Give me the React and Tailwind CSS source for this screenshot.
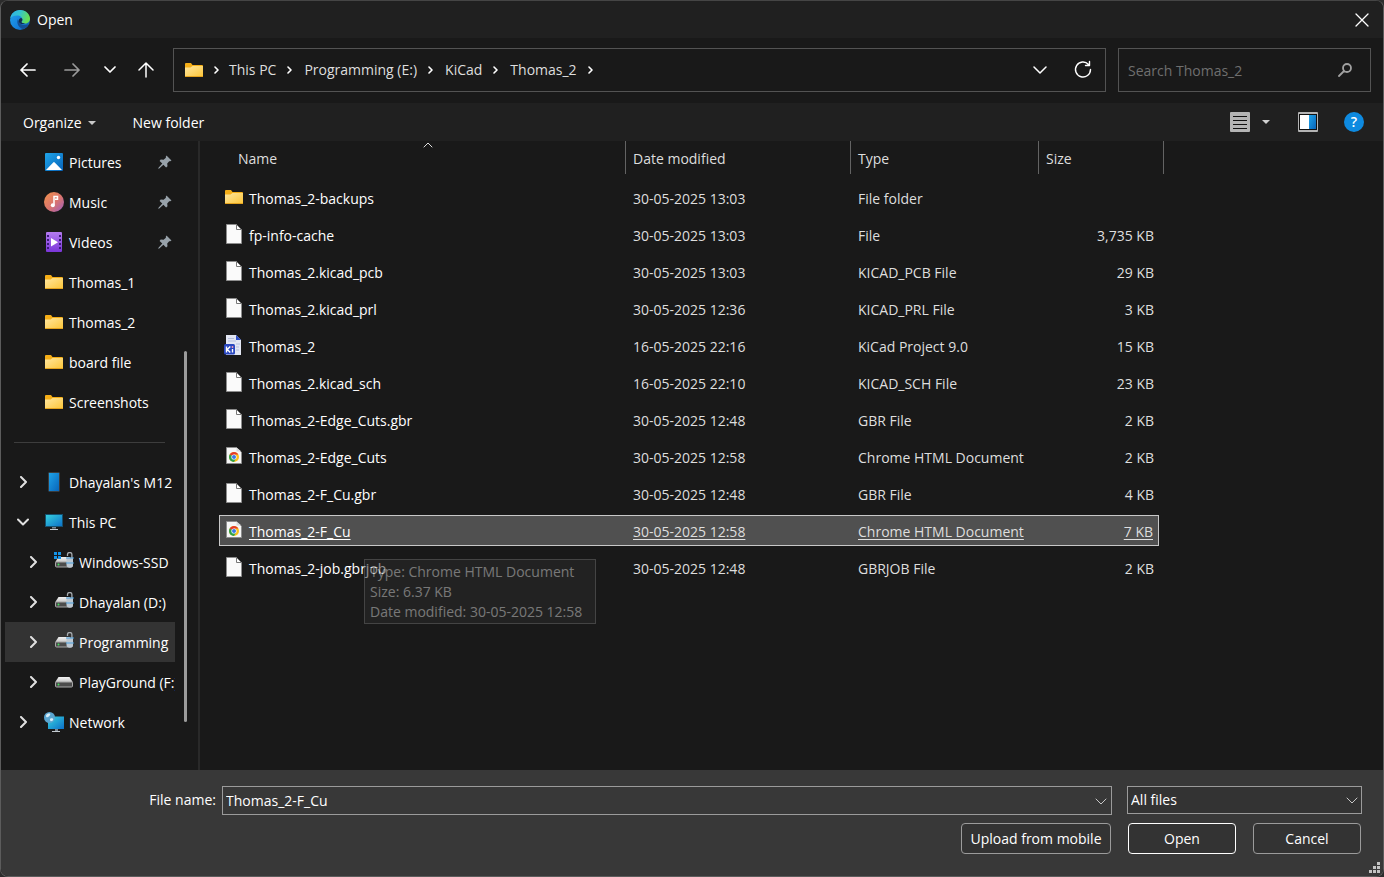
const FOLDER = "folder";

const QUICK_ACCESS = [
  { label: "Pictures", icon: "pictures", pinned: true },
  { label: "Music", icon: "music", pinned: true },
  { label: "Videos", icon: "videos", pinned: true },
  { label: "Thomas_1", icon: FOLDER },
  { label: "Thomas_2", icon: FOLDER },
  { label: "board file", icon: FOLDER },
  { label: "Screenshots", icon: FOLDER },
];

const DEVICES = [
  { label: "Dhayalan's M12", icon: "phone", expand: "closed" },
  { label: "This PC", icon: "pc", expand: "open" },
  { label: "Windows-SSD", icon: "driveWin", expand: "closed", nested: true },
  { label: "Dhayalan (D:)", icon: "driveLock", expand: "closed", nested: true },
  { label: "Programming", icon: "driveLock", expand: "closed", nested: true, active: true },
  { label: "PlayGround (F:)", icon: "drive", expand: "closed", nested: true },
  { label: "Network", icon: "network", expand: "closed" },
];

const FILES = [
  { name: "Thomas_2-backups", date: "30-05-2025 13:03", type: "File folder", size: "", icon: FOLDER },
  { name: "fp-info-cache", date: "30-05-2025 13:03", type: "File", size: "3,735 KB", icon: "file" },
  { name: "Thomas_2.kicad_pcb", date: "30-05-2025 13:03", type: "KICAD_PCB File", size: "29 KB", icon: "file" },
  { name: "Thomas_2.kicad_prl", date: "30-05-2025 12:36", type: "KICAD_PRL File", size: "3 KB", icon: "file" },
  { name: "Thomas_2", date: "16-05-2025 22:16", type: "KiCad Project 9.0", size: "15 KB", icon: "kicad" },
  { name: "Thomas_2.kicad_sch", date: "16-05-2025 22:10", type: "KICAD_SCH File", size: "23 KB", icon: "file" },
  { name: "Thomas_2-Edge_Cuts.gbr", date: "30-05-2025 12:48", type: "GBR File", size: "2 KB", icon: "file" },
  { name: "Thomas_2-Edge_Cuts", date: "30-05-2025 12:58", type: "Chrome HTML Document", size: "2 KB", icon: "chrome" },
  { name: "Thomas_2-F_Cu.gbr", date: "30-05-2025 12:48", type: "GBR File", size: "4 KB", icon: "file" },
  { name: "Thomas_2-F_Cu", date: "30-05-2025 12:58", type: "Chrome HTML Document", size: "7 KB", icon: "chrome", selected: true },
  { name: "Thomas_2-job.gbrjob", date: "30-05-2025 12:48", type: "GBRJOB File", size: "2 KB", icon: "file" },
];

const PATH = ["This PC", "Programming (E:)", "KiCad", "Thomas_2"];

function Stroke({ d, w = 20, h = 20, width = 1.5, className = "" }) {
  return (
    <svg width={w} height={h} viewBox={`0 0 ${w} ${h}`} fill="none" stroke="currentColor" strokeWidth={width} strokeLinecap="round" strokeLinejoin="round" className={className} aria-hidden="true">
      <path d={d} />
    </svg>
  );
}

// gradients shared by all the icons
function IconDefs() {
  return (
    <svg width="0" height="0" className="absolute" aria-hidden="true">
      <defs>
        <linearGradient id="gFolder" x1="0" y1="0" x2="1" y2="1">
          <stop offset="0" stopColor="#ffe7a0" /><stop offset="1" stopColor="#fcc537" />
        </linearGradient>
        <linearGradient id="gBlue" x1="0" y1="0" x2="1" y2="1">
          <stop offset="0" stopColor="#1fa5ea" /><stop offset="1" stopColor="#0863b8" />
        </linearGradient>
        <linearGradient id="gScreen" x1="0" y1="0" x2="1" y2="1">
          <stop offset="0" stopColor="#37d3df" /><stop offset="1" stopColor="#0c6fc9" />
        </linearGradient>
        <linearGradient id="gMusic" x1="0" y1="0" x2="1" y2="1">
          <stop offset="0" stopColor="#f2934c" /><stop offset=".55" stopColor="#d9746f" /><stop offset="1" stopColor="#9a5cc4" />
        </linearGradient>
        <linearGradient id="gVideo" x1="0" y1="0" x2="0" y2="1">
          <stop offset="0" stopColor="#b47bf0" /><stop offset="1" stopColor="#7a35d8" />
        </linearGradient>
        <linearGradient id="gDrive" x1="0" y1="0" x2="0" y2="1">
          <stop offset="0" stopColor="#f2f2f2" /><stop offset="1" stopColor="#c4c4c4" />
        </linearGradient>
        <linearGradient id="gEdgeTop" x1="0" y1="0" x2="1" y2=".3">
          <stop offset="0" stopColor="#2fb0ea" /><stop offset=".5" stopColor="#33c3cf" /><stop offset="1" stopColor="#66de55" />
        </linearGradient>
        <linearGradient id="gEdgeLow" x1="0" y1=".3" x2="1" y2="1">
          <stop offset="0" stopColor="#1f9be8" /><stop offset=".5" stopColor="#1580dc" /><stop offset="1" stopColor="#1256a0" />
        </linearGradient>
      </defs>
    </svg>
  );
}

function EdgeLogo() {
  return (
    <svg width="20" height="20" viewBox="0 0 20 20" aria-hidden="true">
      <circle cx="10" cy="10" r="10" fill="url(#gEdgeLow)" />
      <path d="M.2 8.500C1 3.500 5 0 10 0c6 0 10 4.300 10 8.500 0 3.200-2.400 5-5 5-2.200 0-3.500-.8-3.500-1.500 0-.5.900-.9.900-2.400 0-2.300-2.200-4.200-5.200-4.200C4 5.400 1.500 6.500.2 8.500z" fill="url(#gEdgeTop)" />
      <path d="M8 9c-2 4.300.9 9 5.100 10 2.300-.7 4.500-2.300 5.700-4.700C13.800 16.500 8.600 14 8 9z" fill="#134f94" />
      <path d="M12.400 9.600c0 1.500-.9 1.900-.9 2.400 0 .7 1.300 1.500 3.500 1.500-2 1.200-5.300.6-6.200-1.700-.5-1.300.5-3.300 2.200-3.700.8.100 1.400.9 1.400 1.500z" fill="#122c4c" />
    </svg>
  );
}

function Drive({ windows, lock }) {
  return (
    <svg width="20" height="20" viewBox="0 0 20 20" aria-hidden="true">
      <path d="M4.500 5h11L19 10.500H1z" fill="url(#gDrive)" />
      <rect x="1.500" y="10" width="17" height="5" rx="1" fill="#4c4c4c" stroke="#a8a8a8" strokeWidth="1" />
      <circle cx="4.500" cy="12.500" r=".9" fill="#3ee65a" />
      {windows && (
        <path d="M0 0h3v3H0zM4 0h3v3H4zM0 4h3v3H0zM4 4h3v3H4z" fill="#1492e6" />
      )}
      {lock && (
        <>
          <path d="M13.500 4V2.500a2.200 2 0 0 1 4.400 0V6" fill="none" stroke="#a6abb0" strokeWidth="1.300" />
          <path d="M12.500 5.500H19V13c0 1.800-1.200 2.800-3.200 2.800S12.500 14.800 12.500 13z" fill="#bcc7d1" />
          <path d="M12 6h8M12 11h8" stroke="#4da0dc" strokeWidth="1" />
        </>
      )}
    </svg>
  );
}

function Page() {
  return (
    <svg width="20" height="20" viewBox="0 0 20 20" aria-hidden="true">
      <path d="M2.500.5h10l5 5v14h-15z" fill="#fafafa" stroke="#8d8d8d" />
      <path d="M12.500.5v5h5z" fill="#fff" stroke="#777" />
    </svg>
  );
}

function Icon({ name }) {
  switch (name) {
    case "folder":
      return (
        <svg width="20" height="20" viewBox="0 0 20 20" aria-hidden="true">
          <path d="M1 4a1 1 0 0 1 1-1h5l1.500 2H18a1 1 0 0 1 1 1v3H1z" fill="#f5ae17" />
          <path d="M1 7.500h5.500L8.500 6H19v10a1 1 0 0 1-1 1H2a1 1 0 0 1-1-1z" fill="url(#gFolder)" />
          <path d="M1 16.500h18" stroke="#e3a21d" />
        </svg>
      );
    case "pictures":
      return (
        <svg width="20" height="20" viewBox="0 0 20 20" aria-hidden="true">
          <rect x="1" y="1" width="18" height="18" rx="1" fill="url(#gBlue)" />
          <circle cx="14.500" cy="5.500" r="1.700" fill="#fff" />
          <path d="M2 18l7.200-7.500a1 1 0 0 1 1.500 0L18 18z" fill="#fff" />
        </svg>
      );
    case "music":
      return (
        <svg width="20" height="20" viewBox="0 0 20 20" aria-hidden="true">
          <circle cx="10" cy="10" r="10" fill="url(#gMusic)" />
          <circle cx="8.800" cy="13.200" r="2" fill="#fff" />
          <path d="M10 13V4.500h3.500v2.800H11" fill="none" stroke="#fff" strokeWidth="1.500" />
        </svg>
      );
    case "videos":
      return (
        <svg width="20" height="20" viewBox="0 0 20 20" aria-hidden="true">
          <rect x="2" y="0" width="16" height="20" rx="1" fill="url(#gVideo)" />
          <path d="M4 3v15M16 3v15" stroke="#3b1a78" strokeWidth="2" strokeDasharray="2 2" />
          <path d="M7 6l7 4.200L7 14.400z" fill="#fff" />
        </svg>
      );
    case "phone":
      return (
        <svg width="20" height="20" viewBox="0 0 20 20" aria-hidden="true">
          <rect x="4.500" y=".5" width="11" height="19" rx="1" fill="url(#gBlue)" stroke="#3c3c3c" />
        </svg>
      );
    case "pc":
      return (
        <svg width="20" height="20" viewBox="0 0 20 20" aria-hidden="true">
          <rect x="1.500" y="2.500" width="17" height="12" fill="url(#gScreen)" stroke="#14506f" />
          <path d="M8 15h4v1.500H8z" fill="#7d8790" />
          <path d="M6 17.500h8" stroke="#c4cbd1" />
        </svg>
      );
    case "driveWin":
      return <Drive windows lock />;
    case "driveLock":
      return <Drive lock />;
    case "drive":
      return <Drive />;
    case "network":
      return (
        <svg width="20" height="20" viewBox="0 0 20 20" aria-hidden="true">
          <rect x="4" y="4.500" width="16" height="12.500" fill="url(#gScreen)" />
          <path d="M11 17h3v2h-3z" fill="#7d8790" />
          <path d="M8 19.500h8" stroke="#c4cbd1" />
          <circle cx="5.500" cy="5.500" r="5.500" fill="#5aa5d0" />
          <path d="M2 3.500c1-2 3-2.300 4-1.800S5 4.500 4 5s-2 .5-2-1.500zM6.500 6.500c1.500-.5 2.700 0 2.700 1S7.500 9.500 6.800 9.200s-1.300-2.200-.3-2.700z" fill="#d8eef9" />
        </svg>
      );
    case "kicad":
      return (
        <svg width="20" height="20" viewBox="0 0 20 20" aria-hidden="true">
          <path d="M2 0h10l5 5v15H2z" fill="#e3e7f4" />
          <path d="M12 0v5h5z" fill="#2f4ec4" />
          <path d="M4 3.500h6M4 6h8M12 9h4M12 12h3M12 15h3" stroke="#b5bfdf" />
          <rect x="0" y="9" width="11" height="10.500" rx="1.500" fill="#2947c0" />
          <path d="M2.500 11.500v6M6.300 11.500l-3 3 3 3M8.500 14v3.500" fill="none" stroke="#fff" strokeWidth="1.400" />
          <circle cx="8.500" cy="12" r=".9" fill="#ff9db0" />
        </svg>
      );
    case "chrome":
      return (
        <svg width="20" height="20" viewBox="0 0 20 20" aria-hidden="true">
          <path d="M2.500 1.500h10l5 5v11h-15z" fill="#f6f6f6" stroke="#8d8d8d" />
          <path d="M12.500 1.500v4h5z" fill="#d9d9d9" />
          <circle cx="10" cy="11" r="5" fill="#fbc116" />
          <path d="M10 11L5.670 8.500A5 5 0 0 1 14.330 8.500H10z" fill="#e33b2e" />
          <path d="M10 11L5.670 8.500A5 5 0 0 0 10 16l2.200-3.700z" fill="#2da14c" />
          <circle cx="10" cy="11" r="2.600" fill="#fff" />
          <circle cx="10" cy="11" r="2" fill="#3b78e7" />
        </svg>
      );
    default:
      return <Page />;
  }
}

function Pin() {
  return (
    <svg width="14" height="14" viewBox="0 0 14 14" fill="#98a2aa" aria-hidden="true">
      <path d="M8.500.5l5 5-1.300.8-1-.1-2 2.300.3 2.800-1.400 1.100-2.700-2.700L1.200 13.500l-1 .3.300-1L4.300 8.600 1.600 5.900 2.700 4.500l2.900.3 2.300-2-.1-1z" />
    </svg>
  );
}

function TreeItem({ item }) {
  return (
    <button type="button"
      className={`flex h-10 w-full items-center overflow-hidden whitespace-nowrap text-left ${item.nested ? "pl-[18px]" : "pl-2"} ${item.active ? "bg-[#333333]" : ""}`}>
      <span className="flex w-5 shrink-0 justify-center text-[#e0e0e0]">
        {item.expand === "closed" && <Stroke w={12} h={12} width={2} d="M4 1l5 5-5 5" />}
        {item.expand === "open" && <Stroke w={12} h={12} width={2} d="M1 3.500l5 5 5-5" />}
      </span>
      <span className="ml-[11px] w-5 shrink-0"><Icon name={item.icon} /></span>
      <span className="ml-[5px] pt-0.5">{item.label}</span>
      {item.pinned && <span className="ml-auto pr-[3px]"><Pin /></span>}
    </button>
  );
}

function FileRow({ file }) {
  const on = file.selected;
  const cell = `flex h-[31px] items-center pt-0.5 ${on ? "border-y border-[#c8c8c8] bg-[#505050] underline underline-offset-2" : ""}`;
  return (
    <tr aria-selected={!!on}>
      <td className="h-[37px] p-0">
        <div className={`${cell} relative pl-1 text-white ${on ? "border-l" : "ml-px"}`}>
          <span className="mb-1 mr-[5px] shrink-0"><Icon name={file.icon} /></span>
          <span>{file.name}</span>
          {on && (
            <div role="tooltip" className="absolute left-36 top-[43px] z-10 min-w-[232px] whitespace-nowrap border border-[#707070] bg-[#2b2b2b] px-[5px] pb-px pt-0.5 text-[#d6d6d6] opacity-50">
              <p>Type: Chrome HTML Document</p>
              <p>Size: 6.37 KB</p>
              <p>Date modified: 30-05-2025 12:58</p>
            </div>
          )}
        </div>
      </td>
      <td className="p-0"><div className={`${cell} pl-[7px]`}>{file.date}</div></td>
      <td className="p-0"><div className={`${cell} pl-[7px]`}>{file.type}</div></td>
      <td className="p-0">
        <div className={`${cell} mr-[5px] justify-end pr-[5px] ${on ? "border-r" : ""}`}>{file.size}</div>
      </td>
    </tr>
  );
}

export default function App() {
  return (
    <div className="bg-[#2c2c2c] font-['Open_Sans','Noto_Sans',sans-serif] text-[14px] leading-5 text-[#dedede]">
      <IconDefs />
      <div className="flex min-h-screen flex-col overflow-hidden rounded-lg border border-[#5c5c5c] border-t-[#454545] bg-[#191919]">
        {/* Title bar */}
        <header className="flex h-[37px] items-center bg-[#202020] pl-[9px] pr-[14px] text-white">
          <EdgeLogo />
          <h1 className="ml-[7px]">Open</h1>
          <button type="button" aria-label="Close" className="ml-auto">
            <Stroke w={14} h={14} width={1.3} d="M1 1l12 12M13 1L1 13" />
          </button>
        </header>

        {/* Navigation */}
        <div className="flex h-[65px] items-center pb-px pl-[5px] pr-3">
          <button type="button" aria-label="Back" className="flex w-11 justify-center text-white">
            <Stroke w={16} h={16} width={1.7} d="M15 8H1M7 2L1 8l6 6" />
          </button>
          <button type="button" aria-label="Forward" className="flex w-11 justify-center text-[#9a9a9a]">
            <Stroke w={16} h={16} width={1.7} d="M1 8h14M9 2l6 6-6 6" />
          </button>
          <button type="button" aria-label="Recent locations" className="flex w-8 justify-center text-white">
            <Stroke w={12} h={12} width={1.7} d="M1 3l5 5 5-5" />
          </button>
          <button type="button" aria-label="Up" className="flex w-10 justify-center text-white">
            <Stroke w={16} h={16} width={1.5} d="M8 15V1M1 8l7-7 7 7" />
          </button>

          <nav aria-label="Address" className="ml-[7px] flex h-11 flex-1 items-center border border-[#535353] pl-[10px] pr-3">
            <Icon name="folder" />
            <span className="flex w-[25px] justify-center text-white">
              <Stroke w={8} h={8} width={1.6} d="M2 1l3 3-3 3" />
            </span>
            {PATH.map((part) => (
              <span key={part} className="flex items-center">
                <button type="button" className="whitespace-nowrap">{part}</button>
                <span className="flex w-7 justify-center text-white">
                  <Stroke w={8} h={8} width={1.6} d="M2 1l3 3-3 3" />
                </span>
              </span>
            ))}
            <button type="button" aria-label="Previous locations" className="ml-auto text-white">
              <Stroke w={14} h={14} width={1.5} d="M1 4l6 6 6-6" />
            </button>
            <button type="button" aria-label="Refresh" className="ml-[26px] text-white">
              <Stroke w={20} h={20} width={1.4} d="M17.500 9.500A7.500 7.500 0 1 1 15.500 4.400M16.500 1.500v4h-4" />
            </button>
          </nav>

          <div className="ml-3 flex h-11 w-[253px] items-center border border-[#535353] pl-[9px] pr-[18px]">
            <input type="search" aria-label="Search Thomas_2" placeholder="Search Thomas_2" className="min-w-0 flex-1 bg-transparent pt-0.5 outline-none placeholder:text-[#6f6f6f]" />
            <Stroke w={14} h={14} width={1.8} d="M13 5a4 4 0 1 1-8 0 4 4 0 1 1 8 0zM6 8l-5 5" className="text-[#a0a0a0]" />
          </div>
        </div>

        {/* Toolbar */}
        <div className="flex h-[38px] items-center bg-[#202020] pl-[22px] pr-[19px] text-white">
          <button type="button" className="flex items-center gap-[6px] pt-0.5">
            Organize
            <svg width="8" height="4" viewBox="0 0 8 4" fill="#c8c8c8" aria-hidden="true"><path d="M0 0h8L4 4z" /></svg>
          </button>
          <button type="button" className="ml-[37px] pt-0.5">New folder</button>
          <button type="button" aria-label="Change your view" className="ml-auto">
            <svg width="20" height="20" viewBox="0 0 20 20" aria-hidden="true">
              <rect width="20" height="20" rx="1" fill="#b4b4b4" />
              <path d="M3 4.500h14M3 8.500h14M3 12.500h14M3 16.500h14" stroke="#111" />
            </svg>
          </button>
          <button type="button" aria-label="More options" className="ml-3 flex h-5 items-center">
            <svg width="8" height="4" viewBox="0 0 8 4" fill="#d0d0d0" aria-hidden="true"><path d="M0 0h8L4 4z" /></svg>
          </button>
          <button type="button" aria-label="Show the preview pane" className="ml-7">
            <svg width="20" height="20" viewBox="0 0 20 20" aria-hidden="true">
              <rect width="20" height="20" rx="1" fill="#b4b4b4" />
              <rect x="1.500" y="2.500" width="17" height="15" fill="#fff" stroke="#111" />
              <rect x="11" y="3" width="7" height="14" fill="url(#gBlue)" />
            </svg>
          </button>
          <button type="button" aria-label="Get help" className="ml-[26px] flex size-5 items-center justify-center rounded-full bg-[#0e8ae0] font-semibold">?</button>
        </div>

        <div className="flex flex-1">
          {/* Folder tree */}
          <aside className="flex w-[199px] shrink-0 border-r-2 border-[#292929] pl-1">
            <div className="w-[170px] overflow-hidden pt-px text-white">
              {QUICK_ACCESS.map((item) => <TreeItem key={item.label} item={item} />)}
              <div className="flex h-10 items-center pl-[9px] pr-[10px]"><hr className="w-full border-[#3d3d3d]" /></div>
              {DEVICES.map((item) => <TreeItem key={item.label} item={item} />)}
            </div>
            <div className="ml-[9px] flex w-[3px] flex-col" aria-hidden="true">
              <div className="grow-[13]" />
              <div className="grow-[23] rounded-full bg-[#9b9b9b]" />
              <div className="grow-[3]" />
            </div>
          </aside>

          {/* File list */}
          <main className="min-w-0 flex-1 pl-[19px]">
            <table className="w-[945px] table-fixed border-separate border-spacing-0">
              <colgroup>
                <col className="w-[407px]" />
                <col className="w-[225px]" />
                <col className="w-[188px]" />
                <col className="w-[125px]" />
              </colgroup>
              <thead>
                <tr>
                  <th scope="col" aria-sort="ascending" className="h-[38px] p-0 align-top font-normal">
                    <div className="relative flex h-[33px] items-center border-r border-[#636363] pl-[19px] pt-0.5">
                      Name
                      <Stroke w={10} h={6} width={1} d="M1 5l4-4 4 4" className="absolute left-[204px] top-px" />
                    </div>
                  </th>
                  {["Date modified", "Type", "Size"].map((label) => (
                    <th key={label} scope="col" className="p-0 align-top font-normal">
                      <div className="flex h-[33px] items-center border-r border-[#636363] pl-[7px] pt-0.5">{label}</div>
                    </th>
                  ))}
                </tr>
              </thead>
              <tbody>
                {FILES.map((file) => <FileRow key={file.name} file={file} />)}
              </tbody>
            </table>
          </main>
        </div>

        {/* Footer */}
        <footer className="bg-[#383838] pt-4 text-white">
          <div className="flex items-start pr-[21px]">
            <label htmlFor="file-name" className="w-[215px] pt-1 text-right">File name:</label>
            <div className="ml-[6px] flex h-[29px] flex-1 items-center border border-[#9b9b9b] pl-[3px] pr-1">
              <input id="file-name" type="text" defaultValue="Thomas_2-F_Cu" className="min-w-0 flex-1 bg-transparent outline-none" />
              <button type="button" aria-label="Show recent names" className="text-[#c8c8c8]">
                <Stroke w={12} h={12} width={1} d="M1 4l5 5 5-5" />
              </button>
            </div>
            <div className="relative ml-[15px] w-[235px]">
              <select aria-label="File type" className="block h-7 w-full appearance-none border border-[#9b9b9b] bg-[#333333] pl-[3px] outline-none">
                <option>All files</option>
              </select>
              <Stroke w={12} h={12} width={1} d="M1 4l5 5 5-5" className="pointer-events-none absolute right-1 top-2 text-[#c8c8c8]" />
            </div>
          </div>
          <div className="mt-2 flex justify-end gap-[17px] pr-[22px]">
            <button type="button" className="h-[31px] w-[150px] whitespace-nowrap rounded border border-[#9b9b9b] bg-[#333333]">Upload from mobile</button>
            <button type="button" className="h-[31px] w-[108px] rounded border border-white bg-[#333333]">Open</button>
            <button type="button" className="h-[31px] w-[108px] rounded border border-[#9b9b9b] bg-[#333333]">Cancel</button>
          </div>
          <div className="flex h-[22px] items-end justify-end pb-[3px] pr-[3px]">
            <svg width="11" height="11" viewBox="0 0 11 11" fill="#c4c4c4" aria-hidden="true">
              <path d="M8 0h3v3H8zM8 4h3v3H8zM8 8h3v3H8zM4 4h3v3H4zM4 8h3v3H4zM0 8h3v3H0z" />
            </svg>
          </div>
        </footer>
      </div>
    </div>
  );
}
